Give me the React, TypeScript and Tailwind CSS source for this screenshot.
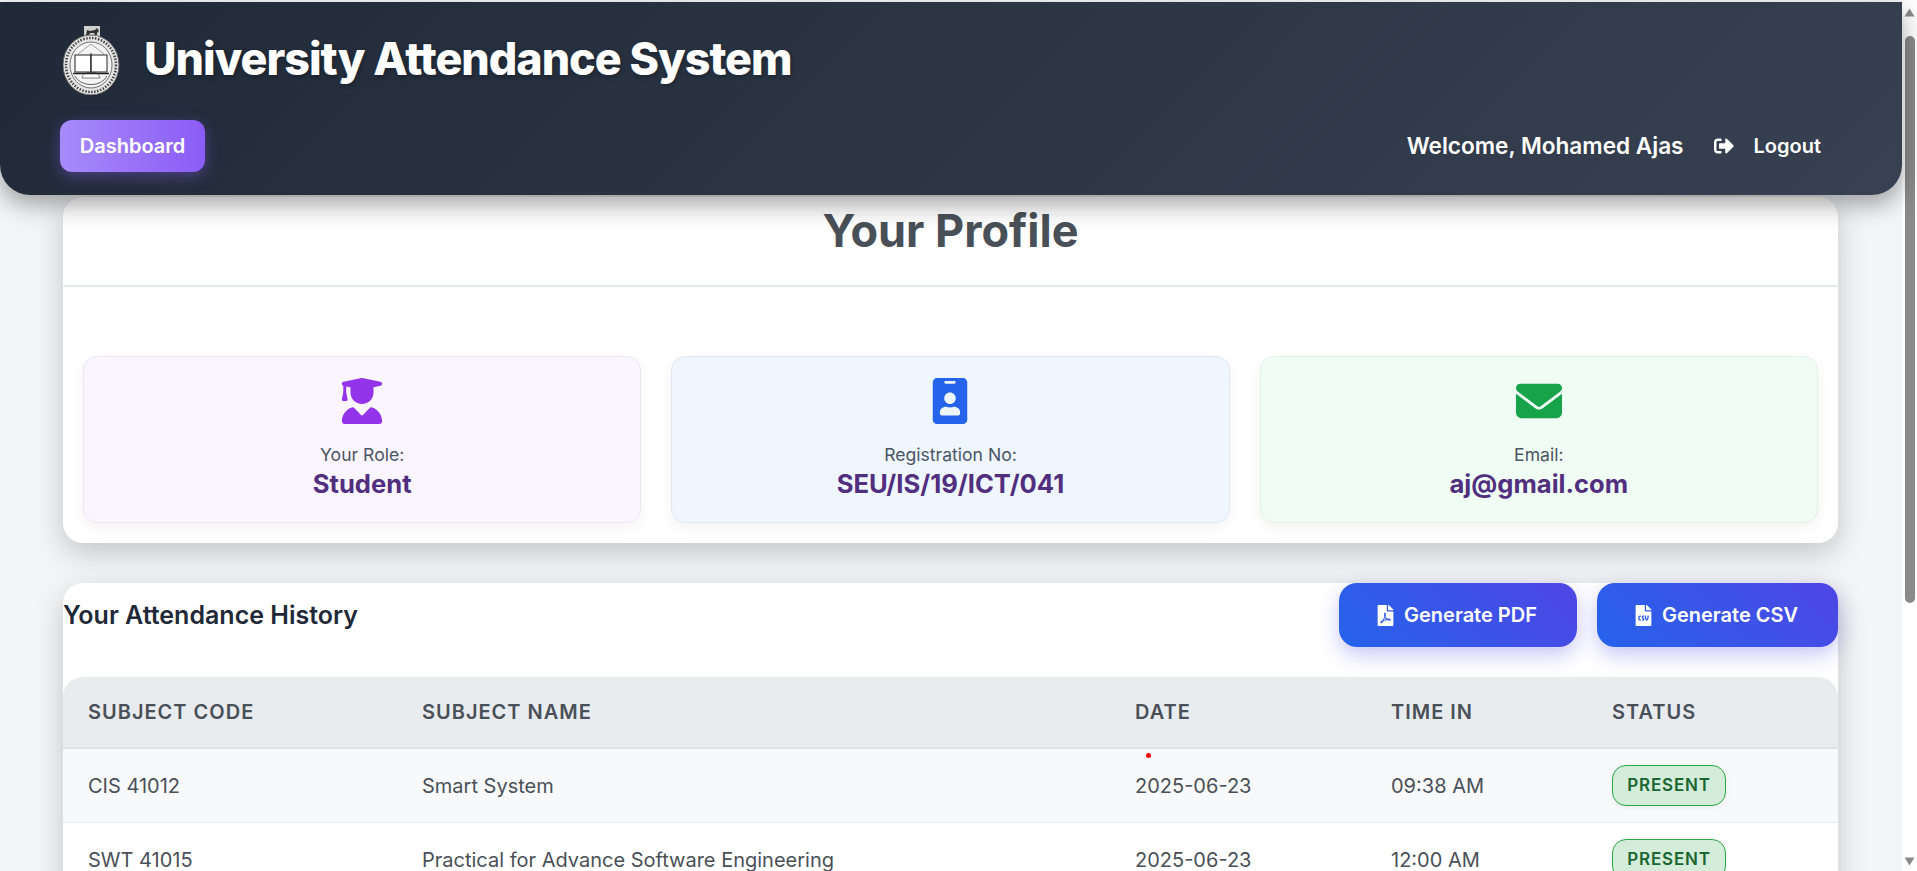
import { FaFileCsv, FaFilePdf, FaIdBadge, FaSignOutAlt } from "react-icons/fa";
import { FaEnvelope, FaUserGraduate } from "react-icons/fa6";

const PROFILE_CARDS = [
  {
    label: "Your Role:",
    value: "Student",
    icon: <FaUserGraduate className="text-[46px] text-[#9333ea]" />,
    box: "bg-[#faf5ff] border-[#ece6f5]",
  },
  {
    label: "Registration No:",
    value: "SEU/IS/19/ICT/041",
    icon: <FaIdBadge className="text-[46px] text-[#2563eb]" />,
    box: "bg-[#eff6ff] border-[#e1e9f5]",
  },
  {
    label: "Email:",
    value: "aj@gmail.com",
    icon: <FaEnvelope className="text-[46px] text-[#16a34a]" />,
    box: "bg-[#f0fdf4] border-[#e2f2e8]",
  },
];

const ATTENDANCE = [
  { code: "CIS 41012", name: "Smart System", date: "2025-06-23", time: "09:38 AM", status: "PRESENT" },
  { code: "SWT 41015", name: "Practical for Advance Software Engineering", date: "2025-06-23", time: "12:00 AM", status: "PRESENT" },
];

function Logo() {
  return (
    <svg width="58" height="69" viewBox="0 0 58 69" className="shrink-0">
      <rect x="21" y="0" width="16" height="11" fill="#cfcfcf" />
      <path d="M23 9l1-5 3 1 5-1 2-2 2 3-2 2v2h-2l-1-2h-4l-1 2z" fill="#333" />
      <ellipse cx="28" cy="39" rx="28" ry="30" fill="#e4e4e4" stroke="#666" strokeWidth="1" />
      <ellipse cx="28" cy="39" rx="25" ry="27" fill="none" stroke="#444" strokeWidth="2.5" strokeDasharray="1.5 1.5" />
      <ellipse cx="28" cy="39" rx="21" ry="23" fill="#f4f4f4" stroke="#555" strokeWidth="0.8" />
      <path d="M12 50a17 13 0 0 0 32 0" fill="none" stroke="#666" strokeWidth="1" />
      <path d="M19 52a9 6 0 0 1 18 0z" fill="#fff" stroke="#666" strokeWidth="0.8" />
      <path d="M15 28l13-10 13 10" fill="none" stroke="#888" strokeWidth="0.8" />
      <rect x="12" y="29" width="16" height="17" fill="#fff" stroke="#222" strokeWidth="1" />
      <rect x="28" y="29" width="16" height="17" fill="#fff" stroke="#222" strokeWidth="1" />
      <path d="M10 47.500h36" stroke="#222" strokeWidth="1.6" />
      <path d="M28 27v20" stroke="#333" strokeWidth="1" />
    </svg>
  );
}

function ScrollArrow({ down }: { down?: boolean }) {
  return (
    <svg width="11" height="9" viewBox="0 0 11 9" className={down ? "rotate-180" : ""}>
      <path d="M5.500 0.500L10.500 8.500H0.500z" fill="#8a8a8a" />
    </svg>
  );
}

function Scrollbar() {
  return (
    <div className="w-[15px] h-full shrink-0 bg-white flex flex-col items-center pt-[8px] pb-[5px]">
      <ScrollArrow />
      <div className="mt-[19px] w-[10px] h-[567px] rounded-[5px] bg-[#8a8a8a]" />
      <div className="flex-1" />
      <ScrollArrow down />
    </div>
  );
}

export default function App() {
  return (
    <div className="flex h-screen overflow-hidden bg-[#f4f5f7] font-['Inter',sans-serif]">
      <div className="flex-1 min-w-0 pt-[2px]">
        <header className="relative z-10 h-[193px] rounded-b-[30px] bg-[linear-gradient(135deg,#1f2937,#374151)] pl-[60px] pr-[81px] pt-[24px] shadow-[0_10px_25px_rgba(0,0,0,0.35)]">
          <div className="flex items-center gap-[23px] pl-[3px]">
            <Logo />
            <h1 className="-mt-[3px] text-[44.8px] leading-[50px] font-extrabold tracking-[-1px] text-white [text-shadow:1px_2px_4px_rgba(0,0,0,0.3)]">
              University Attendance System
            </h1>
          </div>
          <div className="mt-[25px] flex items-center justify-between">
            <button className="h-[52px] w-[145px] rounded-[12px] bg-[linear-gradient(90deg,#a78bfa,#8b5cf6)] text-[20px] font-semibold text-white shadow-[0_4px_15px_rgba(139,92,246,0.4)]">
              Dashboard
            </button>
            <div className="flex items-center text-white">
              <span className="text-[22.6px] font-semibold">Welcome, Mohamed Ajas</span>
              <FaSignOutAlt className="ml-[30px] text-[20px]" />
              <span className="ml-[20px] text-[20px] font-semibold">Logout</span>
            </div>
          </div>
        </header>

        <main className="pl-[63px] pr-[64px] pt-[2px]">
          <section className="rounded-[20px] bg-white shadow-[0_10px_30px_rgba(0,0,0,0.2)] pb-[20px]">
            <div className="h-[90px] border-b-2 border-[#e5e8ec] text-center">
              <h2 className="text-[45px] leading-[68px] font-bold text-[#495057]">Your Profile</h2>
            </div>
            <div className="mt-[69px] grid grid-cols-3 gap-[30px] px-[20px]">
              {PROFILE_CARDS.map((card) => (
                <div
                  key={card.label}
                  className={`h-[167px] rounded-[14px] border ${card.box} flex flex-col items-center shadow-[0_5px_15px_rgba(0,0,0,0.05)]`}
                >
                  <div className="h-[46px] mt-[21px] flex items-center justify-center">{card.icon}</div>
                  <div className="mt-[18px] text-[17.6px] leading-[26px] text-[#4b5563]">{card.label}</div>
                  <div className="text-[25.6px] leading-[32px] font-bold text-[#512e7e]">{card.value}</div>
                </div>
              ))}
            </div>
          </section>

          <section className="mt-[40px] rounded-t-[20px] bg-white shadow-[0_10px_30px_rgba(0,0,0,0.2)]">
            <div className="flex items-center justify-between">
              <h3 className="pt-[2px] text-[25px] font-semibold text-[#1f2937]">Your Attendance History</h3>
              <div className="flex gap-[20px]">
                <button className="flex h-[64px] w-[238px] items-center justify-center gap-[8px] rounded-[18px] bg-[linear-gradient(45deg,#2563eb,#4f46e5)] pr-[4px] text-[20px] font-semibold text-white shadow-[0_8px_20px_rgba(79,70,229,0.3)]">
                  <FaFilePdf className="text-[21px]" />
                  Generate PDF
                </button>
                <button className="flex h-[64px] w-[241px] items-center justify-center gap-[8px] rounded-[18px] bg-[linear-gradient(45deg,#2563eb,#4f46e5)] pr-[4px] text-[20px] font-semibold text-white shadow-[0_8px_20px_rgba(79,70,229,0.3)]">
                  <FaFileCsv className="text-[21px]" />
                  Generate CSV
                </button>
              </div>
            </div>
            <table className="mt-[30px] w-full table-fixed border-separate border-spacing-0">
              <thead>
                <tr className="text-left text-[20px] tracking-[1px] text-[#495057]">
                  <th className="h-[72px] w-[335px] rounded-tl-[20px] border-b-2 border-[#dee2e6] bg-[#e9ecef] pl-[25px] font-semibold">SUBJECT CODE</th>
                  <th className="w-[713px] border-b-2 border-[#dee2e6] bg-[#e9ecef] pl-[24px] font-semibold">SUBJECT NAME</th>
                  <th className="w-[256px] border-b-2 border-[#dee2e6] bg-[#e9ecef] pl-[24px] font-semibold">DATE</th>
                  <th className="w-[221px] border-b-2 border-[#dee2e6] bg-[#e9ecef] pl-[24px] font-semibold">TIME IN</th>
                  <th className="rounded-tr-[20px] border-b-2 border-[#dee2e6] bg-[#e9ecef] pl-[24px] font-semibold">STATUS</th>
                </tr>
              </thead>
              <tbody className="text-[20px] text-[#495057]">
                {ATTENDANCE.map((row, i) => (
                  <tr key={row.code} className={i === 0 ? "bg-[#f8f9fa]" : "bg-white"}>
                    <td className="h-[74px] border-b border-[#e9ecef] pl-[25px]">{row.code}</td>
                    <td className="border-b border-[#e9ecef] pl-[24px]">{row.name}</td>
                    <td className="relative border-b border-[#e9ecef] pl-[24px]">
                      {i === 0 && <span className="absolute left-[35px] top-[4px] size-[5px] rounded-full bg-[#ff0000]" />}
                      {row.date}
                    </td>
                    <td className="border-b border-[#e9ecef] pl-[24px]">{row.time}</td>
                    <td className="border-b border-[#e9ecef] pl-[24px]">
                      <span className="inline-flex h-[41px] w-[114px] items-center justify-center rounded-[14px] border border-[#28a745] bg-[#d4edda] text-[17px] font-semibold tracking-[0.8px] text-[#1a6630] shadow-[0_2px_5px_rgba(0,0,0,0.05)]">
                        {row.status}
                      </span>
                    </td>
                  </tr>
                ))}
              </tbody>
            </table>
          </section>
        </main>
      </div>
      <Scrollbar />
    </div>
  );
}
